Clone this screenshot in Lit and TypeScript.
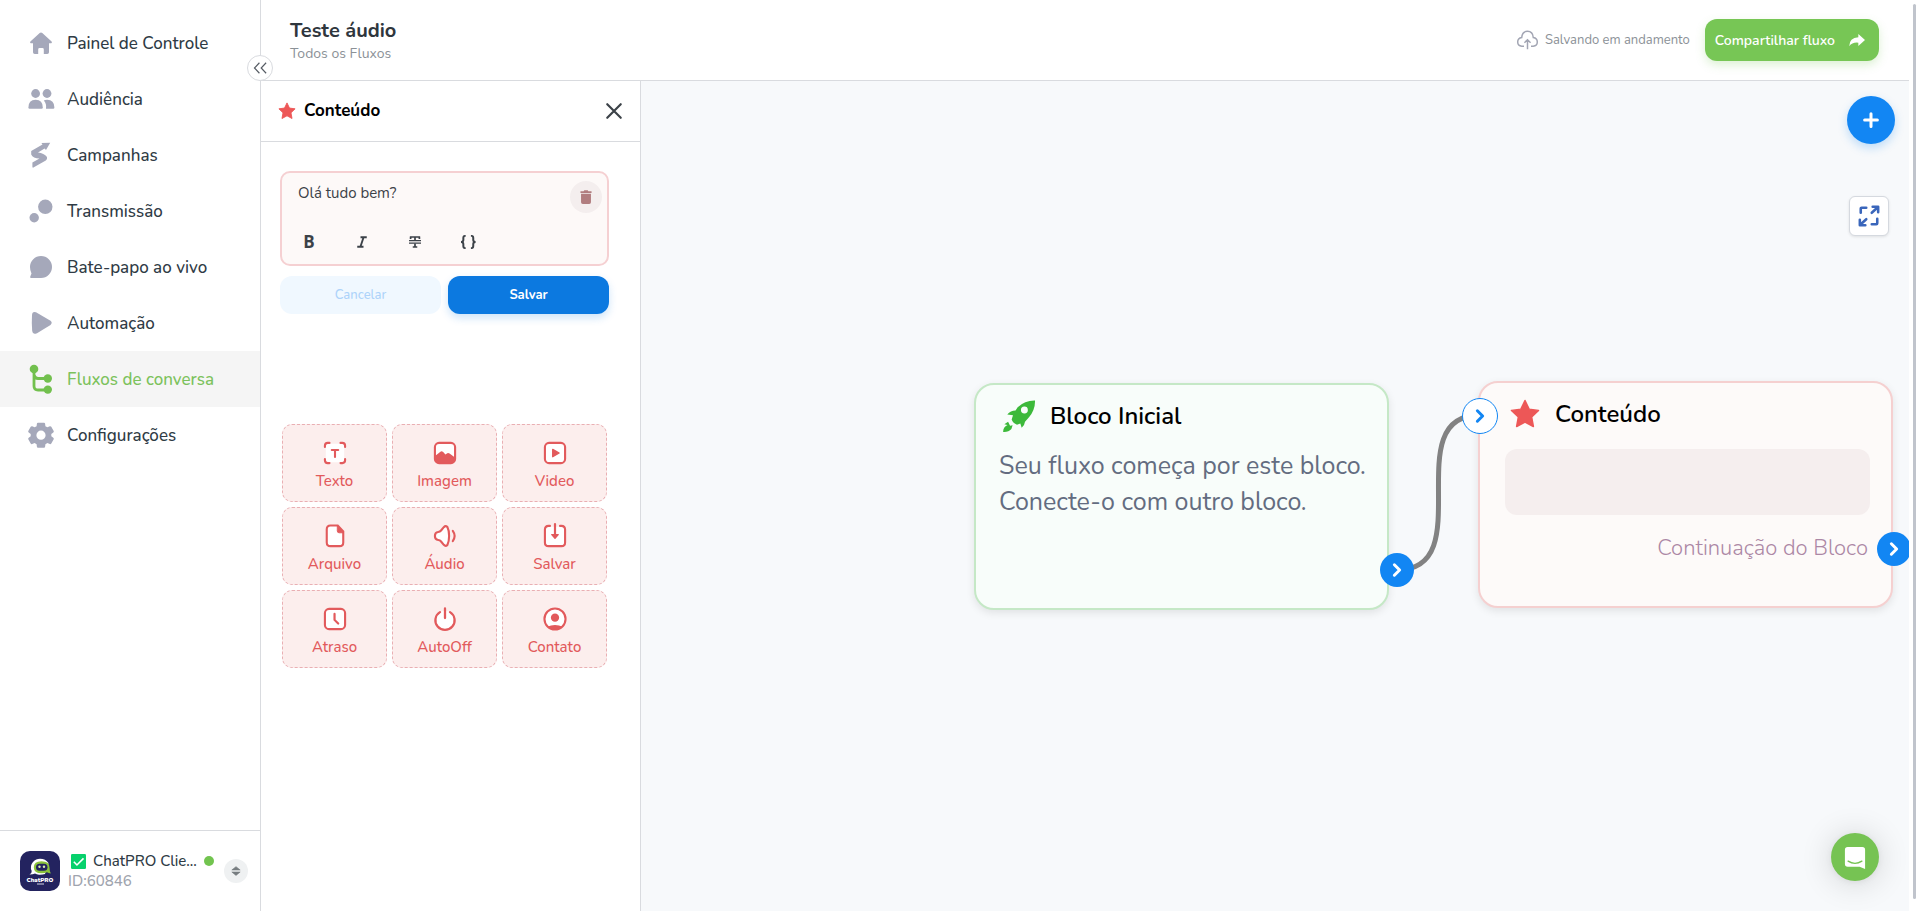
import { LitElement, html, svg, css, type SVGTemplateResult } from "lit";
import { customElement, property } from "lit/decorators.js";

const icons: Record<string, SVGTemplateResult> = {
  home: svg`<path d="M12 1.500q-.8 0-1.300.5L1.400 10.600q-.9 1 .3 1.600H4v9q0 1.800 1.800 1.800h3.400v-4.600q0-1.400 1.400-1.400h2.800q1.400 0 1.400 1.400V23h3.400q1.800 0 1.800-1.800v-9h2.300q1.200-.6.3-1.600L13.300 2Q12.800 1.500 12 1.500z" fill="currentColor"/>`,
  people: svg`<g fill="currentColor"><circle cx="6.600" cy="6.500" r="4.400"/><circle cx="18" cy="6.500" r="4.400"/><path d="M-.6 20.600q0-7.800 7.200-7.800t7.200 7.800q0 1.200-1.200 1.200H.6q-1.200 0-1.200-1.200z"/><path d="M14.800 13.600q1.200-.8 3.400-.8 7 0 7.200 7.800 0 1.200-1.200 1.200H17q.8-5-2.200-8.200z"/></g>`,
  campaign: svg`<path d="M12.400 0 21.200-.2 17 7 15.600 5.600 9 9.400q6 .6 9 4.600.6 2.200-1.200 3.600L4.400 24.600q-1 .2-1-.8v-4.200L10.500 15.600Q4 15.300 2.200 11.500V8L13.500 1.600z" fill="currentColor"/>`,
  broadcast: svg`<g fill="currentColor"><circle cx="16.300" cy="7.800" r="7.200"/><circle cx="5.200" cy="18.800" r="4.700"/></g>`,
  chat: svg`<path d="M1 12a11 11 0 1 1 11 11H2.200q-1.400 0-1-1.200l1.300-3.200Q1 15.500 1 12z" fill="currentColor"/>`,
  play: svg`<path d="M3 4q.3-4.200 4-2.700L21.500 9.800q2.400 2 0 4.200L8 22.200q-4.300 2-4.800-2.200Q2.500 12 3 4z" fill="currentColor"/>`,
  flow: svg`<path d="M5 2v17q0 4 4 4h10M5 8q1 3.500 4 3.500h10" fill="none" stroke="currentColor" stroke-width="2.800"/><g fill="currentColor"><circle cx="5" cy="2" r="4.300"/><circle cx="18.800" cy="11.500" r="4.200"/><circle cx="18.800" cy="22.600" r="4.200"/></g>`,
  gear: svg`<path fill="currentColor" fill-rule="evenodd" d="M9-.3h6q1 0 1.100 1l.3 2.500 2 1.100 2.400-1q1-.3 1.500.5l2.400 4.300q.4.900-.4 1.500l-2 1.500v2.200l2 1.500q.8.600.4 1.500l-2.400 4.300q-.6.800-1.500.5l-2.400-1-2 1.100-.3 2.500q-.1 1-1.100 1H9q-1 0-1.100-1l-.3-2.500-2-1.100-2.400 1q-1 .3-1.500-.5l-2.400-4.300q-.4-.9.400-1.500l2-1.500v-2.200l-2-1.500Q-1.100 9-.7 8.100l2.400-4.300q.6-.8 1.500-.5l2.400 1 2-1.100L7.900.7Q8-.3 9-.3zM12 7.600a4.600 4.600 0 1 0 0 9.200 4.600 4.600 0 0 0 0-9.200z"/>`,
  star: svg`<path fill="currentColor" stroke="currentColor" stroke-width="1.200" stroke-linejoin="round" d="m12 1.200 3.300 6.900 7.500 1-5.500 5.300 1.400 7.600L12 18.400 5.300 22l1.400-7.600L1.200 9.100l7.500-1z"/>`,
  close: svg`<path d="m3 3 18 18M21 3 3 21" stroke="currentColor" stroke-width="2.900" stroke-linecap="round"/>`,
  collapse: svg`<path d="M11 3 2.500 12l8.500 9M22.500 3 14 12l8.500 9" fill="none" stroke="currentColor" stroke-width="2"/>`,
  trash: svg`<path fill="currentColor" d="M2.500 2.200h5.500L9 .5h6l1 1.700h5.500V5h-19zM3.500 6.500h17V21q0 3-3 3h-11q-3 0-3-3z"/>`,
  italic: svg`<path d="M9 2.500h12.500M2.500 21.500H15M15 3 9 21" stroke="currentColor" stroke-width="3.800"/>`,
  strike: svg`<path d="M2 2h20M3.200 1v5M20.800 1v5M12 2v6M7.500 22h9M12 15v6" stroke="currentColor" stroke-width="3.400"/><path d="M0 9.300h24M0 14.300h24" stroke="currentColor" stroke-width="2.600"/>`,
  braces: svg`<path d="M8 1.500H6.800Q4 1.500 4 5v3.500Q4 12 0 12q4 0 4 3.500V19q0 3.500 2.800 3.500H8M17 1.500h1.200Q21 1.500 21 5v3.500q0 3.500 4 3.500-4 0-4 3.500V19q0 3.500-2.800 3.500H17" fill="none" stroke="currentColor" stroke-width="3.400"/>`,
  text: svg`<rect x="2" y="2" width="20" height="20" rx="3" fill="#fff"/><path d="M1 5.500V4q0-3 3-3h2M18 1h2q3 0 3 3v1.500M23 18.500V20q0 3-3 3h-2M6 23H4q-3 0-3-3v-1.500" fill="none" stroke="currentColor" stroke-width="2.300" stroke-linecap="round"/><path d="M8.500 8.800h7M12 8.800v7.500" stroke="currentColor" stroke-width="2.300" stroke-linecap="round"/>`,
  image: svg`<rect x="1" y="1" width="22" height="22" rx="4.500" fill="#fff" stroke="currentColor" stroke-width="2.300"/><path d="M1.500 15 7 10.500q1.500-1 3 .5l2.500 2.500 2-1.200q1.300-.8 2.500.3l5.500 4V19q0 3.500-3.500 3.500H5Q1.500 22.500 1.500 19z" fill="currentColor"/>`,
  video: svg`<rect x="1" y="1" width="22" height="22" rx="4.500" fill="#fff" stroke="currentColor" stroke-width="2.300"/><path d="m9.500 8 7 4-7 4z" fill="currentColor" stroke="currentColor" stroke-width="1.500" stroke-linejoin="round"/>`,
  file: svg`<path d="M7 .5h8l6 6.500V19q0 4-4 4H7q-4 0-4-4V4.500q0-4 4-4z" fill="#fff" stroke="currentColor" stroke-width="2.300"/><path d="m14.500 1 6.500 7.500h-4.500q-2 0-2-2z" fill="currentColor" stroke="currentColor"/>`,
  audio: svg`<path d="M1 12q0-4 3.500-4.300 2-.2 3.200-1.700l3-3.600Q12.500.4 14.500 2q2 4 2 10t-2 10q-2 1.600-3.800-.4l-3-3.600q-1.200-1.500-3.200-1.700Q1 16 1 12z" fill="#fff" stroke="currentColor" stroke-width="2.300"/><path d="M20.500 6.500q4 5.500 0 11" fill="none" stroke="currentColor" stroke-width="2.300" stroke-linecap="round"/>`,
  save: svg`<rect x="2" y="2" width="20" height="21" rx="4" fill="#fff"/><path d="M6.500 1H5Q1 1 1 5v14q0 4 4 4h14q4 0 4-4V5q0-4-4-4h-1.500" fill="none" stroke="currentColor" stroke-width="2.300" stroke-linecap="round"/><path d="M12-1v12" stroke="currentColor" stroke-width="2.400" stroke-linecap="round"/><path d="M8.500 10.500h7L12 14.500z" fill="currentColor" stroke="currentColor" stroke-linejoin="round" stroke-width="1.500"/>`,
  delay: svg`<rect x="1" y="1" width="22" height="22" rx="4.500" fill="#fff" stroke="currentColor" stroke-width="2.300"/><path d="M11.500 6.500V13l4 4" fill="none" stroke="currentColor" stroke-width="2.400" stroke-linecap="round"/>`,
  power: svg`<circle cx="12" cy="13" r="10" fill="#fff"/><path d="M6.500 4.500a10.500 10.500 0 1 0 11 0M12 .5V11" fill="none" stroke="currentColor" stroke-width="2.500" stroke-linecap="round"/>`,
  contact: svg`<circle cx="12" cy="12" r="11.500" fill="#fff" stroke="currentColor" stroke-width="2.300"/><circle cx="12" cy="10.500" r="4.500" fill="currentColor"/><path d="M4.500 20.200Q7 18.500 12 18.500t7.500 1.700Q16.500 23.500 12 23.500t-7.500-3.300z" fill="currentColor"/>`,
  cloud: svg`<path d="M8 18.500H5.500Q.8 18.200.8 13.800q0-4.500 4.600-5.200Q6 1.500 12 1.500t6.600 7.100q4.600.7 4.600 5.200 0 4.400-4.700 4.700H16M12 22V11.500M8.500 14.500l3.500-3.300 3.500 3.300" fill="none" stroke="currentColor" stroke-width="1.700"/>`,
  share: svg`<path d="M14 3 24 12l-10 9v-5Q5 15 .3 21.500.5 8 14 7.700z" fill="currentColor"/>`,
  plus: svg`<path d="M12 3.500v17M3.500 12h17" stroke="currentColor" stroke-width="4" stroke-linecap="round"/>`,
  expand: svg`<path d="M3 8.500V4q0-1 1-1h5M15 8.500l6-5.500M16 2h6v6M21 15v5q0 1-1 1h-5M9 15.500 3 21M2 16v6h6" fill="none" stroke="currentColor" stroke-width="2.800" stroke-linecap="round" stroke-linejoin="round"/>`,
  rocket: svg`<path fill="currentColor" fill-rule="evenodd" d="M24 .3Q24.300 7 19.500 13l-3 3.300q-.2 2.500-2.500 4.500l-1-3.200-2.500.9q-3-.8-4-3.800l1-3.300-4.300-.6q2.500-3 6.200-3L11 5.400Q16.500.1 24 .3zM16 4.900a2.600 2.600 0 1 0 .1 5.200 2.600 2.600 0 0 0-.1-5.200z"/><path fill="currentColor" d="M3.800 16.300 1 18.200l2.400.6Q0 20.500.1 24q4 .3 6.200-2.200l.9-2.800-1.900.3z"/>`,
  chevron: svg`<path d="m8.500 5 7 7-7 7" fill="none" stroke="currentColor" stroke-width="4" stroke-linecap="round" stroke-linejoin="round"/>`,
  updown: svg`<path d="M12 1.500 22 9.500H2zM12 22.500 22 14.500H2z" fill="currentColor" stroke="currentColor" stroke-width="1.500" stroke-linejoin="round"/>`,
  messenger: svg`<path d="M4 1h16q3 0 3 3v21l-6-2.500H4q-3 0-3-3V4q0-3 3-3z" fill="currentColor"/><path d="M4.500 16.500q7.500 5 15 0" fill="none" stroke="#76c353" stroke-width="1.500" stroke-linecap="round"/>`,
  check: svg`<rect x="0" y="0" width="24" height="24" rx="2" fill="#07d16c"/><path d="m4.500 12.500 5 5L20 7" fill="none" stroke="#fff" stroke-width="2.500"/>`,
};

const FONT = css`"Nunito", "Lato", "Open Sans", sans-serif`;

@customElement("ui-icon")
class UiIcon extends LitElement {
  @property() name = "";
  static styles = css`
    :host { display: inline-flex; flex: none; width: 24px; height: 24px; }
    svg { display: block; width: 100%; height: 100%; overflow: visible; }
  `;
  render() {
    return html`<svg viewBox="0 0 24 24" fill="none" aria-hidden="true">${icons[this.name]}</svg>`;
  }
}

const base = css`
  *, *::before, *::after { box-sizing: border-box; }
  button { font: inherit; border: 0; padding: 0; background: none; cursor: pointer; display: flex; align-items: center; justify-content: center; }
  a { color: inherit; text-decoration: none; }
  h1, h2, h3, p, ul { margin: 0; padding: 0; list-style: none; }
`;

@customElement("side-nav")
class SideNav extends LitElement {
  static styles = [base, css`
    :host { box-sizing: border-box; display: flex; flex-direction: column; flex: none; width: 261px; background: #fff; border-right: 1px solid #d9dbdf; position: relative; z-index: 2; }
    .menu { flex: 1; padding-top: 15px; }
    .item { display: flex; align-items: center; gap: 14px; height: 56px; padding-left: 29px; font-size: 17px; line-height: 25px; font-weight: 500; color: #2f3b45; }
    .item ui-icon { color: #a5a8ba; }
    .item.active { background: #f5f5f5; color: #7cc25c; }
    .item.active ui-icon { color: #72c04e; }
    .toggle { position: absolute; right: -13px; top: 55px; width: 26px; height: 26px; border-radius: 50%; background: #fff; border: 1px solid #d9dbdf; color: #555b63; }
    .toggle ui-icon { width: 14px; height: 14px; }
    .account { display: flex; align-items: center; gap: 8px; height: 81px; padding: 0 12px 0 20px; border-top: 1px solid #d9dbdf; }
    .logo { width: 40px; height: 40px; flex: none; }
    .who { flex: 1; min-width: 0; font-size: 15px; line-height: 20px; font-weight: 500; color: #2f3b45; }
    .line { display: flex; align-items: center; gap: 7px; }
    .line ui-icon { width: 15px; height: 15px; margin-left: 3px; }
    .name { white-space: nowrap; }
    .dot { flex: none; width: 10px; height: 10px; border-radius: 50%; background: #72c44f; }
    .id { color: #a0a4ae; }
    .switch { flex: none; width: 24px; height: 24px; border-radius: 50%; background: #eff1f2; color: #777d80; }
    .switch ui-icon { width: 10px; height: 10px; }
  `];
  items = [
    ["home", "Painel de Controle"], ["people", "Audiência"], ["campaign", "Campanhas"], ["broadcast", "Transmissão"],
    ["chat", "Bate-papo ao vivo"], ["play", "Automação"], ["flow", "Fluxos de conversa"], ["gear", "Configurações"],
  ];
  render() {
    return html`
      <nav class="menu"><ul>${this.items.map(([icon, label]) => html`
        <li><a href="#" class="item ${icon === "flow" ? "active" : ""}"><ui-icon name=${icon}></ui-icon>${label}</a></li>`)}
      </ul></nav>
      <button class="toggle" aria-label="Recolher menu"><ui-icon name="collapse"></ui-icon></button>
      <div class="account">
        <svg class="logo" viewBox="0 0 40 40" aria-hidden="true">
          <rect width="40" height="40" rx="10" fill="#23235f"/>
          <path d="M9.500 23.500q2.500-1.500 2.200-3.500-2.200-5 1.300-9 3-3.300 7-3.300 5.500 0 8.500 4.300L25 23q-3 1-6 .8-2.500-.3-4-1.300-2 1-5.500 1z" fill="#fff"/>
          <path d="M21.500 10.200q8 0 8 6.300 0 3 1.300 6-2.300-.2-3.800-1.200-2 1-5.500 1-7.700 0-7.700-6t7.700-6.100z" fill="#8ac33b"/>
          <rect x="16" y="12.700" width="11.500" height="7" rx="3.500" fill="#23235f"/>
          <circle cx="19.500" cy="15.700" r="1.200" fill="#d8f0ae"/><circle cx="24" cy="15.700" r="1.200" fill="#d8f0ae"/>
          <text x="20" y="30.500" text-anchor="middle" font-family="Nunito, Lato" font-size="6" font-weight="900" fill="#fff">ChatPRO</text>
          <path d="M17 33h7" stroke="#b8b9d0" stroke-width="1.200"/>
        </svg>
        <div class="who">
          <div class="line"><ui-icon name="check"></ui-icon><span class="name">ChatPRO Clie...</span><span class="dot"></span></div>
          <div class="id">ID:60846</div>
        </div>
        <button class="switch" aria-label="Trocar conta"><ui-icon name="updown"></ui-icon></button>
      </div>`;
  }
}

@customElement("content-panel")
class ContentPanel extends LitElement {
  static styles = [base, css`
    :host { box-sizing: border-box; display: flex; flex-direction: column; flex: none; width: 380px; background: #fff; border-right: 1px solid #d9dbdf; }
    .head { display: flex; align-items: center; gap: 8px; height: 61px; padding: 0 17px; border-bottom: 1px solid #d9dbdf; }
    .head .star { width: 18px; height: 18px; color: #ed5757; }
    .head h2 { flex: 1; font-size: 17px; line-height: 24px; font-weight: 700; color: #000; }
    .close { color: #3c4248; }
    .close ui-icon { width: 18px; height: 18px; }
    .body { padding: 29px 31px 0 19px; }
    .editor { display: flex; flex-direction: column; height: 95px; padding: 8px 5px 10px 15px; border: 2px solid #f5d0d2; border-radius: 10px; background: #fdf9f8; }
    .row { display: flex; flex: 1; }
    textarea { flex: 1; min-width: 0; font: 15px/20px ${FONT}; color: #3c4248; border: 0; padding: 2px 1px; background: none; resize: none; outline: none; height: 42px; overflow: hidden; }
    .trash { flex: none; width: 32px; height: 32px; border-radius: 50%; background: #f4eeee; color: #b17d7f; }
    .trash ui-icon { width: 14px; height: 16px; }
    .tools { display: flex; gap: 29px; color: #3c4248; }
    .tools button { width: 24px; height: 24px; color: inherit; font: 700 17px/24px "Open Sans", sans-serif; }
    .tools ui-icon { width: 12px; height: 12px; }
    .tools .braces { width: 14px; height: 14px; }
    .actions { display: grid; grid-template-columns: 1fr 1fr; gap: 7px; margin-top: 10px; }
    .actions button { height: 38px; border-radius: 12px; font-size: 13px; line-height: 20px; font-weight: 500; }
    .actions .cancel { background: #f0f8ff; color: #add3fa; }
    .actions .save { background: #0c79e0; color: #fff; font-weight: 700; box-shadow: 0 4px 8px #0c79e033; }
    .tiles { display: grid; grid-template-columns: repeat(3, 1fr); gap: 5px; margin-top: 110px; padding: 0 2px; }
    .tile { display: flex; flex-direction: column; gap: 6px; height: 78px; padding-top: 8px; border: 1px dashed #e9afb3; border-radius: 10px; background: #fceeed; color: #e25a5c; font-size: 15px; line-height: 22px; font-weight: 500; }
    .tile ui-icon { width: 22px; height: 22px; }
  `];
  tiles = [
    ["text", "Texto"], ["image", "Imagem"], ["video", "Video"], ["file", "Arquivo"], ["audio", "Áudio"],
    ["save", "Salvar"], ["delay", "Atraso"], ["power", "AutoOff"], ["contact", "Contato"],
  ];
  render() {
    return html`
      <header class="head">
        <ui-icon class="star" name="star"></ui-icon><h2>Conteúdo</h2>
        <button class="close" aria-label="Fechar"><ui-icon name="close"></ui-icon></button>
      </header>
      <div class="body">
        <div class="editor">
          <div class="row">
            <textarea aria-label="Mensagem" .value=${"Olá tudo bem?"}></textarea>
            <button class="trash" aria-label="Excluir"><ui-icon name="trash"></ui-icon></button>
          </div>
          <div class="tools">
            <button aria-label="Negrito">B</button>
            <button aria-label="Itálico"><ui-icon name="italic"></ui-icon></button>
            <button aria-label="Tachado"><ui-icon name="strike"></ui-icon></button>
            <button aria-label="Variável"><ui-icon class="braces" name="braces"></ui-icon></button>
          </div>
        </div>
        <div class="actions"><button class="cancel">Cancelar</button><button class="save">Salvar</button></div>
        <div class="tiles">${this.tiles.map(([icon, label]) => html`
          <button class="tile"><ui-icon name=${icon}></ui-icon>${label}</button>`)}
        </div>
      </div>`;
  }
}

@customElement("flow-canvas")
class FlowCanvas extends LitElement {
  static styles = [base, css`
    :host { display: block; flex: 1; min-width: 0; position: relative; overflow: hidden; background: #f7f9fb; }
    .edges { position: absolute; left: 0; top: 0; overflow: visible; z-index: 1; }
    .node { position: absolute; width: 415px; height: 227px; border-radius: 20px; padding: 15px 23px; box-shadow: 0 3px 8px #00000018; }
    .start { left: 333px; top: 302px; background: #f8fdfa; border: 2px solid #c5e8c6; }
    .content { left: 837px; top: 300px; background: #fdfaf9; border: 2px solid #f5d0d0; }
    .title { display: flex; align-items: center; gap: 15px; height: 32px; padding-left: 4px; }
    .title h3 { font-size: 24px; line-height: 32px; font-weight: 600; color: #000; }
    .rocket { width: 32px; height: 32px; color: #3cb93a; }
    .star { width: 30px; height: 30px; color: #ed5757; }
    .content .title { padding-left: 7px; }
    .text { margin-top: 16px; font-size: 25px; line-height: 36px; color: #636c80; white-space: nowrap; }
    .slot { height: 66px; margin: 19px -2px 0 2px; border-radius: 12px; background: #f5eeee; }
    .next { margin-top: 15px; font-size: 22px; line-height: 36px; font-weight: 300; color: #ac87a5; text-align: right; }
    .ports { background: none; border-color: transparent; box-shadow: none; z-index: 2; pointer-events: none; }
    .port { position: absolute; width: 34px; height: 34px; border-radius: 50%; background: #1286f3; color: #fff; pointer-events: auto; }
    .port ui-icon { width: 18px; height: 18px; }
    .start .out { right: -27px; bottom: 21px; }
    .content .out { right: -20px; top: 149px; }
    .content .in { left: -18px; top: 15px; width: 36px; height: 36px; background: #fff; color: #1286f3; border: 1px solid #1286f3; }
    .add, .fit, .help { position: absolute; z-index: 3; }
    .add { right: 14px; top: 15px; width: 48px; height: 48px; border-radius: 50%; background: #1286f3; color: #fff; box-shadow: 0 4px 10px #1286f340; }
    .add ui-icon { width: 18px; height: 18px; }
    .fit { right: 20px; top: 115px; width: 40px; height: 40px; border-radius: 6px; background: #fff; color: #3a66bb; border: 1px solid #d5d9df; box-shadow: 0 1px 3px #0000001a; }
    .fit ui-icon { width: 22px; height: 22px; }
    .help { right: 30px; bottom: 30px; width: 48px; height: 48px; border-radius: 50%; background: #76c353; color: #fff; box-shadow: 0 1px 6px #0000000f, 0 2px 32px #00000029; }
    .help ui-icon { width: 22px; height: 22px; }
  `];
  render() {
    return html`
      <article class="node start">
        <div class="title"><ui-icon class="rocket" name="rocket"></ui-icon><h3>Bloco Inicial</h3></div>
        <p class="text">Seu fluxo começa por este bloco.<br>Conecte-o com outro bloco.</p>
      </article>
      <article class="node content">
        <div class="title"><ui-icon class="star" name="star"></ui-icon><h3>Conteúdo</h3></div>
        <div class="slot"></div>
        <p class="next">Continuação do Bloco</p>
      </article>
      <svg class="edges" width="1" height="1" aria-hidden="true">
        <path d="M756 489C840 489 755 334 839 334" fill="none" stroke="#828282" stroke-width="5"/>
      </svg>
      <div class="start node ports"><button class="port out" aria-label="Saída do Bloco Inicial"><ui-icon name="chevron"></ui-icon></button></div>
      <div class="content node ports">
        <button class="port in" aria-label="Entrada de Conteúdo"><ui-icon name="chevron"></ui-icon></button>
        <button class="port out" aria-label="Saída de Conteúdo"><ui-icon name="chevron"></ui-icon></button>
      </div>
      <button class="add" aria-label="Adicionar bloco"><ui-icon name="plus"></ui-icon></button>
      <button class="fit" aria-label="Tela cheia"><ui-icon name="expand"></ui-icon></button>
      <button class="help" aria-label="Ajuda"><ui-icon name="messenger"></ui-icon></button>`;
  }
}

@customElement("app-root")
class AppRoot extends LitElement {
  static styles = [base, css`
    :host { display: flex; height: 100vh; background: #fff; font-family: ${FONT}; }
    .main { flex: 1; min-width: 0; display: flex; flex-direction: column; }
    .top { display: flex; align-items: center; height: 81px; padding: 0 30px 0 29px; border-bottom: 1px solid #d9dbdf; }
    .heading { flex: 1; padding-top: 2px; }
    h1 { font-size: 20px; line-height: 26px; font-weight: 700; color: #2f363d; }
    .heading p { font-size: 14px; line-height: 20px; color: #8b9197; }
    .status { display: flex; align-items: center; gap: 7px; margin-right: 15px; font-size: 13px; line-height: 20px; color: #8b9197; }
    .status ui-icon { width: 21px; height: 21px; color: #a2a5b3; }
    .share { gap: 14px; height: 42px; padding: 0 14px 0 10px; border-radius: 12px; background: #77c655; color: #fff; font-size: 14px; line-height: 21px; font-weight: 600; box-shadow: 0 4px 10px #77c65540; }
    .share ui-icon { width: 16px; height: 16px; }
    .work { flex: 1; display: flex; min-height: 0; }
    .rail { flex: none; width: 11px; padding: 4px 4px 12px; }
    .thumb { height: 100%; width: 3px; border-radius: 2px; background: #c0c4cc; }
  `];
  render() {
    return html`
      <side-nav></side-nav>
      <main class="main">
        <header class="top">
          <div class="heading"><h1>Teste áudio</h1><p>Todos os Fluxos</p></div>
          <div class="status"><ui-icon name="cloud"></ui-icon>Salvando em andamento</div>
          <button class="share">Compartilhar fluxo<ui-icon name="share"></ui-icon></button>
        </header>
        <div class="work"><content-panel></content-panel><flow-canvas></flow-canvas></div>
      </main>
      <div class="rail"><div class="thumb"></div></div>`;
  }
}
